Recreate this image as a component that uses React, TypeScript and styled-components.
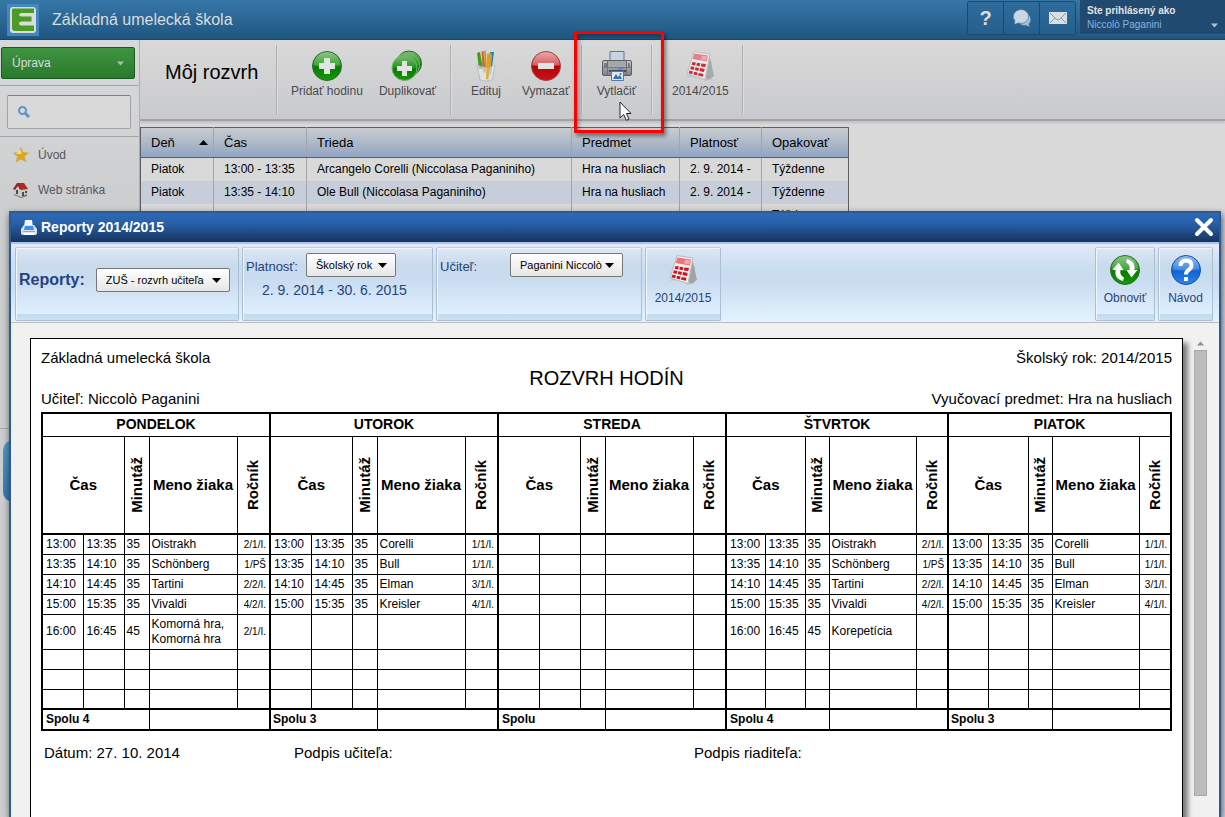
import React from "react";
import styled, { createGlobalStyle } from "styled-components";

const Global = createGlobalStyle`
  * { box-sizing: border-box; }
  html, body, #root { height: 100%; }
  body {
    margin: 0;
    background: #d9d9d9;
    font-family: "Liberation Sans", Arial, sans-serif;
    font-size: 12px;
    line-height: 14px;
  }
  button, select, input { font-family: inherit; margin: 0; }
  svg { display: block; }
`;

/* ---------- page frame ---------- */
const Page = styled.div`
  position: relative;
  display: flex;
  flex-direction: column;
  height: 100%;
  min-height: 480px;
  overflow: hidden;
`;
const TopBar = styled.header`
  display: flex;
  align-items: stretch;
  height: 40px;
  flex: none;
  background: linear-gradient(#3777a8, #1f5681);
  border-bottom: 1px solid #17466c;
  color: #dcdcdc;
`;
const Brand = styled.div`
  flex: 1;
  display: flex;
  align-items: center;
  gap: 13px;
  padding-left: 7px;
  font-size: 16px;
  line-height: 20px;
`;
const TopButtons = styled.div`
  display: flex;
  align-self: flex-start;
  height: 34px;
  margin: 1px 4px 0 0;
  border: 1px solid #174a73;
  border-radius: 2px;
`;
const TopButton = styled.button`
  width: 36px;
  padding: 0;
  display: grid;
  place-items: center;
  color: #dcdcdc;
  background: linear-gradient(#2f6c9c, #25608d);
  border: 0;
  border-right: 1px solid #174a73;
  font-size: 20px;
  font-weight: bold;
  &:last-child { border-right: 0; width: 35px; }
`;
const UserMenu = styled.button`
  width: 145px;
  height: 35px;
  display: flex;
  align-items: flex-end;
  justify-content: space-between;
  padding: 0 7px 2px 7px;
  text-align: left;
  color: #86b3e4;
  background: #204a70;
  border: 0;
  border-bottom: 1px solid #2f628f;
  font-size: 10px;
  line-height: 14px;
  strong { display: block; color: #e2e2e2; }
  svg { margin-bottom: 4px; }
`;
const Body = styled.div`
  display: flex;
  flex: 1;
  min-height: 0;
`;

/* ---------- sidebar ---------- */
const Sidebar = styled.nav`
  width: 140px;
  flex: none;
  display: flex;
  flex-direction: column;
  background: linear-gradient(#d6d9da, #cdcecf 160px);
  border-right: 1px solid #a9aaab;
`;
const SideTop = styled.div`
  padding: 7px 4px 6px 1px;
  border-bottom: 1px solid #a5a6a8;
`;
const EditButton = styled.button`
  width: 100%;
  height: 32px;
  display: flex;
  align-items: center;
  justify-content: space-between;
  padding: 0 10px;
  color: #dcdcdc;
  background: linear-gradient(#3f9440, #2a7a2d);
  border: 1px solid #1b5a1f;
  border-radius: 2px;
  font-size: 12px;
`;
const SearchArea = styled.div`
  padding: 9px 8px 7px 7px;
  border-bottom: 1px solid #a5a6a8;
`;
const SearchBox = styled.label`
  display: flex;
  align-items: center;
  gap: 6px;
  height: 34px;
  padding-left: 10px;
  background: #d9d9d9;
  border: 1px solid #a2a2a2;
  border-top-color: #7d7d7d;
  border-radius: 2px;
  input { flex: 1; min-width: 0; border: 0; background: none; outline: 0; }
`;
const SideLink = styled.a`
  display: flex;
  align-items: center;
  gap: 9px;
  height: 35px;
  padding-left: 13px;
  color: #55565e;
  text-decoration: none;
`;
const SideRest = styled.div`
  height: 222px;
  border-bottom: 1px solid #a9aaab;
`;
const SideTab = styled.div`
  width: 30px;
  height: 62px;
  margin: 11px 0 0 3px;
  border-radius: 10px;
  background: linear-gradient(#4f9fc4, #3a75b4);
`;

/* ---------- main area ---------- */
const Main = styled.main`
  flex: 1;
  min-width: 0;
  background: #d9d9d9;
`;
const Toolbar = styled.div`
  display: flex;
  height: 81px;
  padding: 5px 0 5px 25px;
  background: linear-gradient(#d9d9d9, #c9cacd);
  border-bottom: 2px solid #a2a3a6;
  box-shadow: 0 2px 2px #c2c2c4;
`;
const PageTitle = styled.h1`
  width: 112px;
  margin: 0;
  padding-top: 14px;
  font-size: 20px;
  line-height: 26px;
  font-weight: normal;
  border-right: 1px solid #aeafb1;
  box-shadow: 1px 0 0 #dedede;
`;
const ToolGroup = styled.div<{ $width: number; $pad?: number; $gap?: number }>`
  position: relative;
  display: flex;
  width: ${(p) => p.$width}px;
  padding-left: ${(p) => p.$pad ?? 0}px;
  gap: ${(p) => p.$gap ?? 0}px;
  justify-content: ${(p) => (p.$pad ? "flex-start" : "center")};
  border-right: 1px solid #aeafb1;
  box-shadow: 1px 0 0 #dedede;
`;
const Tool = styled.button`
  display: flex;
  flex-direction: column;
  align-items: center;
  gap: 2px;
  padding: 5px 0 0;
  color: #4a4a4c;
  background: none;
  border: 0;
  font-size: 12px;
  line-height: 14px;
  white-space: nowrap;
`;
const RibbonTool = styled(Tool)`
  gap: 5px;
  padding-top: 6px;
  color: #27437c;
`;
const Highlight = styled.div`
  position: absolute;
  top: -14px;
  left: -8px;
  width: 90px;
  height: 102px;
  border: 3px solid #fd0000;
  box-shadow: 2px 3px 4px rgba(0, 0, 0, 0.45), inset 2px 3px 4px rgba(0, 0, 0, 0.35);
  z-index: 1;
`;
const Pointer = styled.svg`
  position: absolute;
  top: 56px;
  left: 37px;
  z-index: 2;
`;
const Lessons = styled.table`
  width: 709px;
  margin-top: 6px;
  table-layout: fixed;
  border-collapse: collapse;
  border: 1px solid #5d5f62;
  th, td { padding: 0 10px; text-align: left; font-weight: normal; white-space: nowrap; }
  th + th, td + td { border-left: 1px solid #a2a4a8; }
  th {
    height: 30px;
    font-size: 13px;
    border-bottom: 1px solid #5d5f62;
    svg { float: right; margin: 4px -5px 0 0; }
  }
  thead { background: linear-gradient(#c9ccd0, #8fa4c2); }
  td { height: 23px; }
  tbody tr:nth-child(even) { background: #c7ced9; }
`;

/* ---------- report dialog ---------- */
const Dialog = styled.section`
  position: absolute;
  top: 211px;
  left: 9px;
  right: 4px;
  bottom: 0;
  display: flex;
  flex-direction: column;
  background: #f1f1f1;
  border: 2px solid #2d5a93;
  border-bottom: 0;
  box-shadow: 1px 3px 7px rgba(0, 0, 0, 0.65);
`;
const DialogTitle = styled.div`
  display: flex;
  align-items: center;
  gap: 4px;
  height: 29px;
  padding: 0 5px 2px 10px;
  color: #fff;
  background: linear-gradient(#2c69b8, #2861a8 35%, #17345f);
  h2 { flex: 1; margin: 0; font-size: 14px; line-height: 18px; }
`;
const CloseButton = styled.button`
  padding: 0;
  background: none;
  border: 0;
`;
const Ribbon = styled.div`
  display: flex;
  gap: 3px;
  height: 81px;
  padding: 3px 6px 1px 4px;
  background: linear-gradient(#e4eafb, #ccdff1 28%, #cadcef 50%, #e3f4ff);
  border-top: 2px solid #a9c4ee;
  border-bottom: 1px solid #bdbdbd;
  color: #27437c;
`;
const Panel = styled.div<{ $width: number; $push?: boolean }>`
  width: ${(p) => p.$width}px;
  flex: none;
  margin-left: ${(p) => (p.$push ? "auto" : "0")};
  display: flex;
  justify-content: center;
  background: linear-gradient(#dfe5f6, #c8dbed 25%, #cbddf0 50%, #def0ff 92%, #c2d9ee 92%, #cbe0f3);
  border: 1px solid #a8bfd4;
  border-top-color: #c5cede;
  border-radius: 2px;
  box-shadow: inset 1px 1px 0 #f0f6ff;
`;
const PanelForm = styled(Panel)`
  justify-content: flex-start;
  align-items: flex-start;
  flex-wrap: wrap;
  align-content: flex-start;
  padding: 5px 3px 0;
  font-size: 13px;
`;
const ReportForm = styled(PanelForm)`
  align-content: center;
  align-items: center;
  padding: 0 3px 8px;
  gap: 11px;
`;
const ReportLabel = styled.label`
  font-size: 16px;
  line-height: 20px;
  font-weight: bold;
`;
const FieldLabel = styled.label<{ $width: number }>`
  width: ${(p) => p.$width}px;
  padding-top: 7px;
`;
const Period = styled.div`
  width: 100%;
  padding: 5px 16px;
  font-size: 14px;
  line-height: 16px;
`;
const SelectWrap = styled.span<{ $width: number }>`
  position: relative;
  display: block;
  width: ${(p) => p.$width}px;
  select {
    appearance: none;
    width: 100%;
    height: 24px;
    padding: 0 0 0 9px;
    border: 1px solid #777;
    border-radius: 2px;
    background: linear-gradient(#fff, #e6e6e6);
    color: #000;
    font-size: 11px;
  }
  svg { position: absolute; right: 9px; top: 10px; pointer-events: none; }
`;
const Scroller = styled.div`
  flex: 1;
  min-height: 0;
  display: flex;
  gap: 10px;
  padding: 15px 12px 0 19px;
  overflow: hidden;
`;
const ScrollTrack = styled.div`
  width: 14px;
  flex: none;
  display: flex;
  flex-direction: column;
  align-items: center;
  gap: 4px;
  padding: 3px 0 21px;
`;
const ScrollThumb = styled.div`
  flex: 1;
  width: 13px;
  background: #bcbcbc;
  border: 1px solid #a8a8a8;
`;

/* ---------- printed sheet ---------- */
const Sheet = styled.article`
  flex: 1;
  min-width: 0;
  height: 600px;
  padding: 10px;
  background: #fff;
  border: 1px solid #000;
  box-shadow: 5px 5px 5px #7d7d7d;
  font-size: 15px;
  line-height: 18px;
  h3 { margin: 0; font-size: 20px; line-height: 23px; font-weight: normal; text-align: center; }
`;
const Line = styled.div`
  display: flex;
  justify-content: space-between;
`;
const Timetable = styled.table`
  width: 100%;
  margin-top: 4px;
  table-layout: fixed;
  border-collapse: collapse;
  border: 2px solid #000;
  font-size: 12px;
  line-height: 15px;
  th, td { padding: 0 3px; border: 1px solid #000; text-align: left; overflow: hidden; }
  th { padding: 0; text-align: center; font-size: 14px; white-space: nowrap; }
  tr > .edge { border-left-width: 2px; }
  tr:nth-child(2) > th { border-bottom-width: 2px; font-size: 15px; }
  td:nth-child(5n + 3), td:nth-child(5n + 4) { padding: 0 2px; }
  tfoot td { border-top-width: 2px; font-weight: bold; }
  tfoot tr td { padding: 0 3px; }
`;
const Row = styled.tr<{ $height: number }>`
  height: ${(p) => p.$height}px;
`;
const Vertical = styled.span`
  display: inline-block;
  writing-mode: vertical-rl;
  transform: rotate(180deg);
  line-height: 16px;
  vertical-align: middle;
`;
const Grade = styled.td`
  && { font-size: 10px; text-align: right; }
`;
const Signatures = styled.div`
  display: grid;
  grid-template-columns: 250px 400px 1fr;
  padding: 13px 3px 0;
`;

/* ---------- drawings ---------- */
const Caret = ({ color = "#000", up = false, w = 9 }: { color?: string; up?: boolean; w?: number }) => (
  <svg width={w} height="5" viewBox="0 0 9 5" aria-hidden="true">
    <path d={up ? "M0 5 4.5 0 9 5z" : "M0 0h9L4.500 5z"} fill={color} />
  </svg>
);
const DefsSvg = styled.svg`
  position: absolute;
`;
const Defs = () => (
  <DefsSvg width="0" height="0" aria-hidden="true">
    <defs>
      <linearGradient id="gGreen" x1="0" y1="0" x2="0" y2="1">
        <stop offset="0" stopColor="#7dbb75" /><stop offset=".45" stopColor="#249a1d" /><stop offset=".55" stopColor="#087c04" /><stop offset="1" stopColor="#159a0a" />
      </linearGradient>
      <linearGradient id="gRed" x1="0" y1="0" x2="0" y2="1">
        <stop offset="0" stopColor="#e59a9a" /><stop offset=".47" stopColor="#cf4449" /><stop offset=".5" stopColor="#b90008" /><stop offset="1" stopColor="#c9141b" />
      </linearGradient>
      <linearGradient id="gBlue" x1="0" y1="0" x2="0" y2="1">
        <stop offset="0" stopColor="#7fb2ee" /><stop offset=".45" stopColor="#2b7ade" /><stop offset=".55" stopColor="#1265d2" /><stop offset="1" stopColor="#2b86ee" />
      </linearGradient>
      <linearGradient id="gGrey" x1="0" y1="0" x2="0" y2="1">
        <stop offset="0" stopColor="#c4c6c9" /><stop offset="1" stopColor="#7b7f84" />
      </linearGradient>
    </defs>
  </DefsSvg>
);
const Logo = () => (
  <svg width="32" height="32" viewBox="0 0 32 32" aria-hidden="true">
    <rect width="32" height="32" fill="#4288c0" />
    <rect x="3" y="3" width="26" height="26" rx="3" fill="#d9dcd8" />
    <path d="M6 4.500H27V9H14.500Q12 9 12 10.700T14.500 12.500H24.500V17.500H14.500Q12 17.500 12 19.500T14.500 21.500H27V27H8Q5 27 5 24V5.500z" fill="#4c9a2a" />
  </svg>
);
const Ball = ({ kind }: { kind: "add" | "remove" | "refresh" | "help" }) => {
  const fill = kind === "remove" ? "url(#gRed)" : kind === "help" ? "url(#gBlue)" : "url(#gGreen)";
  const edge = kind === "remove" ? "#a34040" : kind === "help" ? "#174f9e" : "#2c6b2a";
  const light = kind === "refresh" || kind === "help" ? "#fff" : "#e2e4e2";
  return (
    <svg width="32" height="32" viewBox="0 0 32 32" aria-hidden="true">
      <circle cx="16" cy="16" r="14.500" fill={fill} stroke={edge} />
      <path d="M3 15a13 13 0 0 1 26 0Q16 18 3 15z" fill="#fff" opacity=".15" />
      {kind === "add" && <path d="M13 8h6v5h5v6h-5v5h-6v-5H8v-6h5z" fill={light} />}
      {kind === "remove" && <path d="M8 13h16v6H8z" fill={light} />}
      {kind === "help" && (
        <g fill="none" stroke={light} strokeWidth="4">
          <path d="M10.500 12q0-5.500 5.500-5.500t5.500 5q0 2.500-3 4.500-2.500 1.700-2.500 4.500" />
          <path d="M14 25h4" />
        </g>
      )}
      {kind === "refresh" && (
        <g fill={light}>
          <path d="M14 27C7.500 25.500 5.500 21 6.700 16H3.500L9.500 8.500 14.500 16H11.500C10.700 19.500 12 22 15 23.500z" />
          <path d="M18 5c6.500 1.500 8.500 6 7.300 11h3.200l-6 7.500L17.500 16h3c.8-3.500-.5-6-3.500-7.500z" />
        </g>
      )}
    </svg>
  );
};
const Duplicate = () => (
  <svg width="32" height="32" viewBox="0 0 32 32" aria-hidden="true">
    <circle cx="18" cy="13.500" r="12.500" fill="url(#gGreen)" stroke="#2c6b2a" />
    <circle cx="16" cy="15.500" r="12.500" fill="url(#gGreen)" stroke="#75ae72" />
    <circle cx="13.500" cy="18" r="12.500" fill="url(#gGreen)" stroke="#75ae72" />
    <path d="M11 11h5v5h5v5h-5v5h-5v-5H6v-5h5z" fill="#e2e4e2" />
  </svg>
);
const Pencils = () => (
  <svg width="32" height="32" viewBox="0 0 32 32" aria-hidden="true">
    <path d="M7 3l3-1 3 17H9z" fill="#3f9b20" />
    <path d="M11.500 1.500l4-1 1.500 22h-4z" fill="#c8671c" />
    <path d="M24 2l-4 0-3 22h4z" fill="#2d7fb2" />
    <path d="M17 4l4-1 1 3-3 24h-3z" fill="#d8a219" />
    <path d="M13 1l2 0 1 15h-1z" fill="#e39a5a" />
    <path d="M7 15q9 4 18 0l-3 15q-6 2-12 0z" fill="#e6ecef" opacity=".65" stroke="#a9b4b9" />
    <path d="M17 14l4-1-3 16h-2z" fill="#e0a51b" opacity=".8" />
  </svg>
);
const Printer = () => (
  <svg width="32" height="32" viewBox="0 0 32 32" aria-hidden="true">
    <path d="M9 13V1.500h14V13z" fill="#c6d4e3" stroke="#6a7686" />
    <rect x="1.500" y="10.500" width="29" height="15" rx="1.500" fill="url(#gGrey)" stroke="#5c6065" />
    <path d="M7 11h18v5H7z" fill="#a4a7ab" />
    <path d="M2 17.500h28" stroke="#5c6065" opacity=".6" />
    <path d="M6.500 11v14M25.500 11v14" stroke="#6c7075" />
    <path d="M3 14h3M27 14h2M3 16h3M27 16h2" stroke="#4b4e52" />
    <path d="M8 21h17" stroke="#4b4e52" strokeWidth="2" />
    <path d="M17 19l6-1" stroke="#3f80d8" />
    <path d="M10.500 21.500h12v9h-12z" fill="#dfe6ee" stroke="#5679a5" />
    <path d="M12 29l3-5 2 3 2-2 2 4z" fill="#2f72b9" />
    <circle cx="19.500" cy="24" r="1" fill="#2f72b9" />
  </svg>
);
const SmallPrinter = () => (
  <svg width="16" height="16" viewBox="0 0 16 16" aria-hidden="true">
    <path d="M4 1h7l1 7H3z" fill="#f4f8ff" />
    <path d="M3 6h10l3 4v4q0 2-2 2H2q-2 0-2-2v-4z" fill="#dfe3ea" />
    <path d="M4 7h8l1 4H3z" fill="#3d90e8" />
    <path d="M2 12h12v1H2z" fill="#9aa3b0" />
    <path d="M3 14h10v2H3z" fill="#fff" />
  </svg>
);
const YearIcon = ({ dim = false }: { dim?: boolean }) => (
  <svg width="32" height="32" viewBox="0 0 32 32" aria-hidden="true" opacity={dim ? 0.87 : 1}>
    <path d="M1 28q10-4 20 3l7-2V12z" fill="#8b9095" opacity=".3" />
    <path d="M25 3l5 23-6 4-3-4z" fill="#a0a4a6" />
    <path d="M10 1.500l16 2.500-5 25.500L3 24z" fill="#eceeee" stroke="#b9bcbf" />
    <path d="M10.500 3.500l13.500 2-1.200 6L8.500 9z" fill="#e7757a" />
    <path d="M18 5.500l5 .7-.8 4-5-.8z" fill="#f4a3a6" />
    <g fill="#cb1420">
      <path d="M8.500 12l3.400.5-.9 3-3.400-.7zM13 12.700l3.400.5-.8 3-3.400-.7zM17.500 13.400l4.500.7-.8 3-4.400-.7z" />
      <path d="M7 16.200l3.500.7-1 3-3.400-.9zM11.600 17.200l3.500.7-.9 3-3.500-.9zM16.200 18.100l4.500.9-.8 3-4.500-1.100z" />
      <path d="M5.500 20.600l3.500.9-1 2.700-3.400-1zM10.200 21.800l3.400.8-.8 2.700-3.500-.9zM14.800 22.900l4.700 1.100-.7 2.800-4.900-1.300z" />
    </g>
  </svg>
);
const Search = () => (
  <svg width="12" height="12" viewBox="0 0 12 12" fill="none" stroke="#5d93cf" aria-hidden="true">
    <circle cx="4.500" cy="4.500" r="3.500" strokeWidth="2" />
    <path d="M7 7l4 4" strokeWidth="3" />
  </svg>
);
const Star = () => (
  <svg width="16" height="16" viewBox="0 0 16 16" aria-hidden="true">
    <path d="M8 0.500l2 5 5.500.500-4.200 3.500L13 15l-5-3-5 3 1.700-5.500L.5 6 6 5.500z" fill="#dfa51c" stroke="#c9a548" strokeWidth=".6" />
    <path d="M7.500 2l1 5L3 7z" fill="#efdb88" />
  </svg>
);
const House = () => (
  <svg width="16" height="16" viewBox="0 0 16 16" aria-hidden="true">
    <path d="M1 7l4-2 10 1v6l-6 3-7-3z" fill="#c9cac9" />
    <path d="M0 7l4-6 4 1-2 6z" fill="#ccc" />
    <path d="M5 1h6l4 6-7 1z" fill="#b3291c" />
    <path d="M4 1L0 7l2 1 3-4 2 4 1-1-2-6z" fill="#8a2b22" />
    <path d="M3 8h2v4H3zM9 10h2v4H9zM12 9h2v2h-2z" fill="#4f4a48" />
    <path d="M1 12l7 3 6-3v2l-6 2-7-3z" fill="#76706a" />
  </svg>
);
const Chat = () => (
  <svg width="20" height="19" viewBox="0 0 20 19" aria-hidden="true">
    <path d="M12 4a6.500 6.500 0 0 1 5 11l1 3-4-1.500A7 7 0 0 1 7 14z" fill="#a9bfd3" stroke="#2a6594" strokeWidth=".6" />
    <path d="M8.500 0.500a7.500 7 0 1 1-2 13.500L2 15.500 3 12A7.500 7 0 0 1 8.500.5z" fill="#c9d6e4" stroke="#2a6594" strokeWidth=".6" />
  </svg>
);
const Mail = () => (
  <svg width="18" height="12" viewBox="0 0 18 12" aria-hidden="true">
    <path d="M0 0h18v12H0z" fill="#dcdfe2" />
    <path d="M1 1l6 6q2 2 4 0l6-6M1 11l5-5M17 11l-5-5" stroke="#7f9db8" fill="none" />
  </svg>
);

/* ---------- data ---------- */
type Lesson = [string, string, string, string, string];
const days: { name: string; count: string; cols: number[]; rows: Lesson[] }[] = [
  {
    name: "PONDELOK", count: "Spolu 4", cols: [41, 41, 25, 88, 33],
    rows: [
      ["13:00", "13:35", "35", "Oistrakh", "2/1/I."],
      ["13:35", "14:10", "35", "Schönberg", "1/PŠ"],
      ["14:10", "14:45", "35", "Tartini", "2/2/I."],
      ["15:00", "15:35", "35", "Vivaldi", "4/2/I."],
      ["16:00", "16:45", "45", "Komorná hra, Komorná hra", "2/1/I."],
    ],
  },
  {
    name: "UTOROK", count: "Spolu 3", cols: [41, 41, 25, 88, 33],
    rows: [
      ["13:00", "13:35", "35", "Corelli", "1/1/I."],
      ["13:35", "14:10", "35", "Bull", "1/1/I."],
      ["14:10", "14:45", "35", "Elman", "3/1/I."],
      ["15:00", "15:35", "35", "Kreisler", "4/1/I."],
    ],
  },
  { name: "STREDA", count: "Spolu", cols: [41, 41, 25, 88, 33], rows: [] },
  {
    name: "ŠTVRTOK", count: "Spolu 4", cols: [39, 40, 24, 87, 32],
    rows: [
      ["13:00", "13:35", "35", "Oistrakh", "2/1/I."],
      ["13:35", "14:10", "35", "Schönberg", "1/PŠ"],
      ["14:10", "14:45", "35", "Tartini", "2/2/I."],
      ["15:00", "15:35", "35", "Vivaldi", "4/2/I."],
      ["16:00", "16:45", "45", "Korepetícia", ""],
    ],
  },
  {
    name: "PIATOK", count: "Spolu 3", cols: [40, 40, 24, 87, 32],
    rows: [
      ["13:00", "13:35", "35", "Corelli", "1/1/I."],
      ["13:35", "14:10", "35", "Bull", "1/1/I."],
      ["14:10", "14:45", "35", "Elman", "3/1/I."],
      ["15:00", "15:35", "35", "Kreisler", "4/1/I."],
    ],
  },
];
const rowHeights = [20, 20, 20, 20, 35, 20, 20, 20];
const blank: Lesson = ["", "", "", "", ""];

const lessonHead = ["Deň", "Čas", "Trieda", "Predmet", "Platnosť", "Opakovať"];
const lessonCols = [73, 93, 265, 108, 82, 87];
const lessons = [
  ["Piatok", "13:00 - 13:35", "Arcangelo Corelli (Niccolasa Paganiniho)", "Hra na husliach", "2. 9. 2014 -", "Týždenne"],
  ["Piatok", "13:35 - 14:10", "Ole Bull (Niccolasa Paganiniho)", "Hra na husliach", "2. 9. 2014 -", "Týždenne"],
  ["", "", "", "", "", "Týždenne"],
];

const Choice = ({ id, width, text }: { id: string; width: number; text: string }) => (
  <SelectWrap $width={width}>
    <select id={id} defaultValue={text}>
      <option>{text}</option>
    </select>
    <Caret />
  </SelectWrap>
);

export default function App() {
  return (
    <Page>
      <Global />
      <Defs />
      <TopBar>
        <Brand><Logo />Základná umelecká škola</Brand>
        <TopButtons>
          <TopButton>?</TopButton>
          <TopButton aria-label="Správy"><Chat /></TopButton>
          <TopButton aria-label="Pošta"><Mail /></TopButton>
        </TopButtons>
        <UserMenu>
          <span><strong>Ste prihlásený ako</strong>Niccolò Paganini</span>
          <Caret color="#b4bcc4" w={7} />
        </UserMenu>
      </TopBar>

      <Body>
        <Sidebar>
          <SideTop>
            <EditButton>Úprava<Caret color="#a9bfa8" w={7} /></EditButton>
          </SideTop>
          <SearchArea>
            <SearchBox><Search /><input type="text" aria-label="Hľadať" /></SearchBox>
          </SearchArea>
          <SideLink href="#uvod"><Star />Úvod</SideLink>
          <SideLink href="#web"><House />Web stránka</SideLink>
          <SideRest />
          <SideTab />
        </Sidebar>

        <Main>
          <Toolbar>
            <PageTitle>Môj rozvrh</PageTitle>
            <ToolGroup $width={174} $pad={14} $gap={16}>
              <Tool><Ball kind="add" />Pridať hodinu</Tool>
              <Tool><Duplicate />Duplikovať</Tool>
            </ToolGroup>
            <ToolGroup $width={131} $pad={19} $gap={20}>
              <Tool><Pencils />Edituj</Tool>
              <Tool><Ball kind="remove" />Vymazať</Tool>
            </ToolGroup>
            <ToolGroup $width={70}>
              <Tool><Printer />Vytlačiť</Tool>
              <Highlight />
              <Pointer width="13" height="20" viewBox="0 0 13 20" aria-hidden="true">
                <path d="M1 1v16l3.700-3.500 2.600 5.800 2.700-1.200-2.600-5.600H12z" fill="#fff" stroke="#22252c" />
              </Pointer>
            </ToolGroup>
            <ToolGroup $width={91} $pad={20}>
              <Tool><YearIcon dim />2014/2015</Tool>
            </ToolGroup>
          </Toolbar>
          <Lessons>
            <colgroup>{lessonCols.map((w, i) => <col key={i} width={w} />)}</colgroup>
            <thead>
              <tr>{lessonHead.map((h, i) => <th key={h}>{i === 0 && <Caret up />}{h}</th>)}</tr>
            </thead>
            <tbody>
              {lessons.map((r, i) => <tr key={i}>{r.map((c, j) => <td key={j}>{c}</td>)}</tr>)}
            </tbody>
          </Lessons>
        </Main>
      </Body>

      <Dialog role="dialog" aria-labelledby="report-title">
        <DialogTitle>
          <SmallPrinter />
          <h2 id="report-title">Reporty 2014/2015</h2>
          <CloseButton aria-label="Zavrieť">
            <svg width="20" height="20" viewBox="0 0 20 20" aria-hidden="true">
              <path d="M3 3l14 14M17 3L3 17" stroke="#fff" strokeWidth="4" strokeLinecap="round" />
            </svg>
          </CloseButton>
        </DialogTitle>
        <Ribbon>
          <ReportForm $width={224}>
            <ReportLabel htmlFor="report">Reporty:</ReportLabel>
            <Choice id="report" width={134} text="ZUŠ - rozvrh učiteľa" />
          </ReportForm>
          <PanelForm $width={191}>
            <FieldLabel htmlFor="period" $width={60}>Platnosť:</FieldLabel>
            <Choice id="period" width={90} text="Školský rok" />
            <Period>2. 9. 2014 - 30. 6. 2015</Period>
          </PanelForm>
          <PanelForm $width={206}>
            <FieldLabel htmlFor="teacher" $width={70}>Učiteľ:</FieldLabel>
            <Choice id="teacher" width={113} text="Paganini Niccolò" />
          </PanelForm>
          <Panel $width={76}><RibbonTool><YearIcon />2014/2015</RibbonTool></Panel>
          <Panel $width={60} $push><RibbonTool><Ball kind="refresh" />Obnoviť</RibbonTool></Panel>
          <Panel $width={55}><RibbonTool><Ball kind="help" />Návod</RibbonTool></Panel>
        </Ribbon>
        <Scroller>
          <Sheet>
            <Line><span>Základná umelecká škola</span><span>Školský rok: 2014/2015</span></Line>
            <h3>ROZVRH HODÍN</h3>
            <Line><span>Učiteľ: Niccolò Paganini</span><span>Vyučovací predmet: Hra na husliach</span></Line>
            <Timetable>
              <colgroup>
                {days.map((d) => d.cols.map((w, i) => <col key={d.name + i} width={w} />))}
              </colgroup>
              <thead>
                <Row $height={23}>
                  {days.map((d) => <th key={d.name} className="edge" colSpan={5}>{d.name}</th>)}
                </Row>
                <Row $height={98}>
                  {days.map((d) => (
                    <React.Fragment key={d.name}>
                      <th className="edge" colSpan={2}>Čas</th>
                      <th><Vertical>Minutáž</Vertical></th>
                      <th>Meno žiaka</th>
                      <th><Vertical>Ročník</Vertical></th>
                    </React.Fragment>
                  ))}
                </Row>
              </thead>
              <tbody>
                {rowHeights.map((h, r) => (
                  <Row key={r} $height={h}>
                    {days.map((d) => {
                      const [from, to, len, who, grade] = d.rows[r] ?? blank;
                      return (
                        <React.Fragment key={d.name}>
                          <td className="edge">{from}</td>
                          <td>{to}</td>
                          <td>{len}</td>
                          <td>{who}</td>
                          <Grade>{grade}</Grade>
                        </React.Fragment>
                      );
                    })}
                  </Row>
                ))}
              </tbody>
              <tfoot>
                <Row $height={21}>
                  {days.map((d) => (
                    <React.Fragment key={d.name}>
                      <td className="edge" colSpan={3}>{d.count}</td>
                      <td colSpan={2} />
                    </React.Fragment>
                  ))}
                </Row>
              </tfoot>
            </Timetable>
            <Signatures>
              <span>Dátum: 27. 10. 2014</span>
              <span>Podpis učiteľa:</span>
              <span>Podpis riaditeľa:</span>
            </Signatures>
          </Sheet>
          <ScrollTrack>
            <Caret color="#8f8f8f" up w={7} />
            <ScrollThumb />
          </ScrollTrack>
        </Scroller>
      </Dialog>
    </Page>
  );
}
